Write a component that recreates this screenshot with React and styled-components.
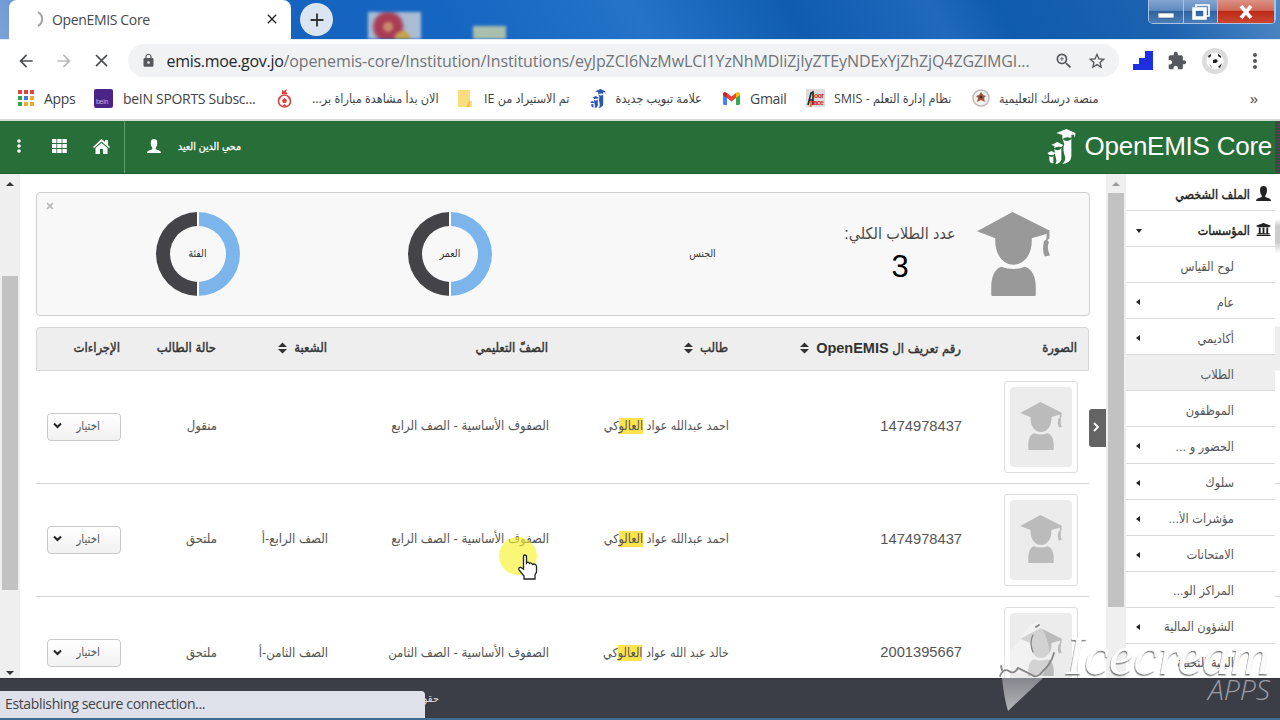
import styled, { createGlobalStyle } from 'styled-components'
import { MdArrowBack, MdArrowForward, MdClose, MdLock, MdZoomIn, MdStarBorder, MdExtension, MdMoreVert, MdAdd } from 'react-icons/md'
import { FaUniversity } from 'react-icons/fa'

const GlobalStyle = createGlobalStyle`
    * {
        box-sizing: border-box;
    }
    body {
        margin: 0;
        overflow: hidden;
        font-family: "Liberation Sans", "DejaVu Sans Condensed", "DejaVu Sans", sans-serif;
        color: #333;
    }
    svg {
        display: block;
        flex-shrink: 0;
    }
`

const Page = styled.div`
    width: 1280px;
    height: 720px;
    display: flex;
    flex-direction: column;
    position: relative;
    overflow: hidden;
    background: #fff;
`

const TabStrip = styled.div`
    height: 40px;
    display: flex;
    position: relative;
    background: linear-gradient(62deg, #7ea2d8 0%, #1562bd 18%, #1566c2 35%, #2473c8 50%, #0f5cb0 62%, #2069bd 73%, #0f5bae 78%, #1c62b0 90%, #5088c4 100%);
    border-bottom: 1px solid #dcebfa;
`

const Tab = styled.div`
    width: 282px;
    height: 40px;
    margin-left: 9px;
    display: flex;
    align-items: center;
    padding: 0 11px 2px 17px;
    background: #fff;
    border-radius: 8px 8px 0 0;
`

const TabTitle = styled.span`
    flex: 1;
    margin-left: 9px;
    font-family: "Open Sans", sans-serif;
    font-size: 14px;
    letter-spacing: -0.35px;
    color: #45494d;
`

const NewTab = styled.div`
    width: 33px;
    height: 33px;
    margin: 3px 0 0 9px;
    display: flex;
    align-items: center;
    justify-content: center;
    border-radius: 50%;
    background: #dbe4f1;
    color: #333;
`

const DesktopIcon = styled.div`
    position: absolute;
    left: ${props => props.$left}px;
    top: ${props => props.$top}px;
    width: ${props => props.$width}px;
    height: ${props => 39 - props.$top}px;
    background: ${props => props.$fill};
    filter: blur(1.5px);
    clip-path: inset(-5px -5px 0 -5px);
`

const WindowButtons = styled.div`
    height: 24px;
    width: 128px;
    margin-left: auto;
    margin-right: 4px;
    display: flex;
    border: 1px solid #a9c2df;
    border-top: 0;
    border-radius: 0 0 5px 5px;
    overflow: hidden;
`

const WindowButton = styled.div`
    flex: ${props => props.$flex};
    display: flex;
    align-items: center;
    justify-content: center;
    border-right: 1px solid #a9c2df;
    background: ${props => props.$close
        ? 'linear-gradient(#dc9184 0, #cf6a58 45%, #bd2b18 50%, #cc4530 100%)'
        : 'linear-gradient(#83a5cf 0, #5f8bc0 45%, #30639f 50%, #4b7fb9 100%)'};
`

const Toolbar = styled.div`
    height: 42px;
    display: flex;
    align-items: center;
    padding: 0 13px 1px 16px;
    color: #55585c;
`

const NavIcon = styled.div`
    width: 37.5px;
    color: ${props => props.$off ? '#b9bbbd' : '#4d5053'};
`

const AddressBar = styled.div`
    width: 991px;
    height: 33px;
    margin-left: -1px;
    display: flex;
    align-items: center;
    justify-content: space-between;
    padding: 0 12px 0 13px;
    border-radius: 17px;
    background: #f1f2f4;
`

const Url = styled.div`
    width: 882px;
    margin-left: -2px;
    margin-right: -8px;
    font-family: "Open Sans", sans-serif;
    font-size: 16px;
    letter-spacing: -0.1px;
    color: #707479;
    white-space: nowrap;
    b {
        font-weight: 400;
        letter-spacing: -0.3px;
        color: #25272a;
    }
`

const Extensions = styled.div`
    flex: 1;
    display: flex;
    align-items: center;
    justify-content: space-between;
    margin-left: 14px;
`

const Bookmarks = styled.div`
    height: 38px;
    display: flex;
    align-items: center;
    padding: 0 0 5px 18px;
    border-bottom: 1px solid #d8dad8;
`

const Bookmark = styled.div`
    width: ${props => props.$width}px;
    display: flex;
    align-items: center;
    gap: ${props => props.$gap || 10}px;
    font-family: "Open Sans", "DejaVu Sans Condensed", "DejaVu Sans", sans-serif;
    font-size: ${props => props.$arabic ? 12.5 : 14}px;
    letter-spacing: ${props => props.$arabic ? 0 : -0.3}px;
    color: #3f4245;
    white-space: nowrap;
`

const Overflow = styled.span`
    margin-left: auto;
    margin-right: 22px;
    font-size: 15px;
    color: #444;
`

const Header = styled.header`
    height: 54px;
    display: flex;
    align-items: center;
    border-top: 1px solid #c7dfcc;
    border-bottom: 1px solid #1f6030;
    background: #276e39;
    color: #fff;
`

const HeaderTools = styled.div`
    width: 125px;
    height: 52px;
    padding: 0 0 2px 16px;
    display: flex;
    align-items: center;
    border-right: 1px solid #5e9a6c;
`

const HeaderIcon = styled.div`
    width: ${props => props.$width}px;
`

const HeaderUser = styled.div`
    display: flex;
    align-items: center;
    gap: 17px;
    margin-left: 22px;
    padding-bottom: 3px;
    font-size: 10.5px;
    -webkit-text-stroke: 0.3px #fff;
`

const Brand = styled.div`
    display: flex;
    align-items: center;
    gap: 9px;
    margin-left: auto;
    margin-right: 3px;
    padding-bottom: 2px;
    font-size: 26px;
    letter-spacing: -0.25px;
    white-space: nowrap;
`

const HeaderEdge = styled.div`
    width: 5px;
    height: 52px;
    background: repeating-linear-gradient(#5c3e5c 0 1px, #34503c 1px 3px);
`

const Main = styled.div`
    height: 504px;
    display: flex;
    overflow: hidden;
`

const Scrollbar = styled.div`
    width: 20px;
    height: 504px;
    flex-shrink: 0;
    display: flex;
    flex-direction: column;
    align-items: center;
    justify-content: space-between;
    padding: 8px 0 3px;
    background: #efefef;
`

const Thumb = styled.div`
    width: 16px;
    height: ${props => props.$height}px;
    margin-top: ${props => props.$offset}px;
    margin-bottom: auto;
    background: #c1c2c1;
`

const Arrow = styled.div`
    border: 4px solid transparent;
    border-top-width: ${props => props.$up ? 0 : 4}px;
    border-bottom-width: ${props => props.$up ? 4 : 0}px;
    border-top-color: ${props => props.$color};
    border-bottom-color: ${props => props.$color};
`

const Content = styled.main`
    width: 1086px;
    height: 504px;
    padding: 18px 0 0 16px;
    flex-shrink: 0;
    position: relative;
    overflow: hidden;
`

const Summary = styled.section`
    width: 1054px;
    height: 124px;
    display: flex;
    border: 1px solid #cdd0ce;
    border-radius: 4px;
    background: #f8f8f8;
`

const Dismiss = styled.div`
    width: 25px;
    padding: 9px 0 0 9px;
`

const ChartCell = styled.div`
    width: ${props => props.$width}px;
    display: flex;
    align-items: center;
    justify-content: center;
`

const Donut = styled.div`
    width: 84px;
    height: 84px;
    border-radius: 50%;
    display: flex;
    align-items: center;
    justify-content: center;
    background: linear-gradient(90deg, #434348 0 41.3px, #fff 41.3px 42.7px, #7cb5ec 42.7px);
`

const DonutHole = styled.div`
    width: 56px;
    height: 56px;
    border-radius: 50%;
    display: flex;
    align-items: center;
    justify-content: center;
    padding-bottom: 3px;
    background: #f8f8f8;
    font-size: 10.5px;
`

const Total = styled.div`
    width: 114px;
    margin-left: 5px;
    padding-top: 31px;
    text-align: center;
    font-size: 16px;
    white-space: nowrap;
    direction: rtl;
    color: #4a4a4a;
`

const TotalCount = styled.div`
    margin-top: 7px;
    font-size: 31px;
    line-height: 34px;
    color: #000;
`

const Table = styled.div`
    width: 1053px;
    margin-top: 11px;
    direction: rtl;
`

const Row = styled.div`
    display: grid;
    grid-template-columns: 116px 233px 180px 221px 111px 96px 96px;
    height: ${props => props.$head ? 43.5 : 113.3}px;
    align-items: center;
    border: 0 solid #d6d8d6;
    border-width: ${props => props.$head ? '1px' : '0 0 1px'};
    border-radius: ${props => props.$head ? '4px 4px 0 0' : 0};
    background: ${props => props.$head ? '#eee' : '#fff'};
    font-size: 13px;
    -webkit-text-stroke: ${props => props.$head ? '0.4px #333' : '0'};
    color: ${props => props.$head ? '#333' : '#555'};
`

const Cell = styled.div`
    padding-right: 11px;
    padding-bottom: ${props => props.$photo ? 0 : 2}px;
    display: flex;
    align-items: center;
    gap: 7px;
    white-space: nowrap;
    font-size: ${props => props.$size ? `${props.$size}px` : 'inherit'};
`

const EmisLabel = styled.span`
    font-size: 14.5px;
    font-weight: 700;
    -webkit-text-stroke: 0;
`

const Mark = styled.mark`
    background: #ffe34c;
    color: inherit;
    padding: 1px 0;
`

const Photo = styled.div`
    width: 74px;
    height: 92px;
    padding: 5px;
    border: 1px solid #ddd;
    border-radius: 3px;
    background: #fff;
`

const PhotoInner = styled.div`
    height: 100%;
    display: flex;
    align-items: center;
    justify-content: center;
    padding-bottom: 2px;
    border-radius: 4px;
    background: #ececec;
`

const Select = styled.div`
    width: 74px;
    height: 28px;
    display: flex;
    align-items: center;
    justify-content: space-between;
    margin-top: 2px;
    padding: 0 20px 2px 5px;
    border: 1px solid #c9c9c9;
    border-radius: 4px;
    background: linear-gradient(#fff, #f1f1f1);
    font-size: 11.5px;
`

const Handle = styled.div`
    position: absolute;
    right: 0;
    top: 235px;
    width: 17px;
    height: 38px;
    display: flex;
    align-items: center;
    justify-content: center;
    padding-right: 2px;
    padding-bottom: 3px;
    border-radius: 3px 0 0 3px;
    background: #646464;
`

const Sidebar = styled.nav`
    width: 149px;
    padding-top: 1px;
    direction: rtl;
    flex-shrink: 0;
`

const SidebarItem = styled.div`
    height: 36.07px;
    display: flex;
    align-items: center;
    padding: ${props => props.$top ? '2px 4px 0 10px' : '2px 41px 0 10px'};
    border-bottom: 1px solid #dadada;
    background: ${props => props.$active ? '#eee' : '#fff'};
    font-size: ${props => props.$top ? 12.5 : 12.7}px;
    -webkit-text-stroke: ${props => props.$top ? '0.4px #222' : '0'};
    color: ${props => props.$top ? '#222' : '#555'};
    white-space: nowrap;
`

const SidebarLabel = styled.span`
    flex: 1;
    margin-right: ${props => props.$top ? 6 : 0}px;
    padding-top: 1px;
`

const Caret = styled.i`
    border-style: solid;
    border-width: ${props => props.$down ? '4px 3px 0' : '3px 4px 3px 0'};
    border-color: ${props => props.$down ? '#222 transparent' : 'transparent #222'};
    margin-top: ${props => props.$down ? 3 : 1}px;
`

const Edge = styled.div`
    flex: 1;
    background: linear-gradient(#fff 0 45px, #ccc 52px 68px, #fff 80px 152px, #eee 153px 196px, #fff 197px 309px, #d6d8d6 309px 310px, #fff 310px 422px, #d6d8d6 422px 423px, #fff 423px);
`

const Footer = styled.footer`
    height: 42px;
    border-top: 1px solid #303238;
    border-bottom: 2px solid #426d92;
    display: flex;
    align-items: flex-end;
    background: #3c3e47;
    color: #ddd;
    font-size: 11px;
`

const Status = styled.div`
    width: 425px;
    height: 27px;
    padding-left: 5px;
    line-height: 26px;
    border-radius: 0 4px 0 0;
    background: #dee0ea;
    font-family: "Open Sans", sans-serif;
    font-size: 14px;
    letter-spacing: -0.36px;
    color: #404348;
`

const FooterText = styled.span`
    width: 14px;
    height: 26px;
    overflow: hidden;
    direction: rtl;
    white-space: nowrap;
`

const Pointer = styled.div`
    position: absolute;
    left: 499px;
    top: 537px;
`

const Watermark = styled.div`
    position: absolute;
    left: 990px;
    top: 610px;
`

const Student = ({ width, height, color }) => (
    <svg width={width} height={height} viewBox="0 0 72 83" fill={color}>
        <path d="M35 0 L71 18 V21 L54 26 C55 41 47 52 36 52 S17 41 18 26 L0 19 Z" />
        <path d="M69 18 H71.500 V26 L69.500 28 L71 30 Q68.500 36 72 43 L67 44 Q64 39 66 29 L68.500 27 Z" />
        <path d="M24 54 Q36 58.500 47 54 C55 56 58 65 58 74 V82 Q58 83 57 83 H15 Q14 83 14 82 V74 C14 65 17 56 24 54 Z" />
    </svg>
)

const User = ({ size = 14 }) => (
    <svg width={size} height={size} viewBox="0 0 14 14" fill="currentColor">
        <path d="M3.800 3 Q4 0 7 0 T10.200 3 V5 Q10 7.500 8.700 8.700 V10.300 L12.500 11.700 Q14 12.300 14 14 H0 Q0 12.300 1.500 11.700 L5.300 10.300 V8.700 Q4 7.500 3.800 5 Z" />
    </svg>
)

const Grads = ({ size, color }) => (
    <svg width={size * 0.82} height={size} viewBox="0 0 28 35" fill={color}>
        <path d="M9 4 L19 0 L28 4 L27.500 9 L26.500 5.500 L24 6 V9 Q19 7 15 10 V6 Z" />
        <path d="M15 10 Q20 14 24 10 V28 Q23 34 15 35 Q19 31 17.500 27 Q15 20 17 15 Z" />
        <path d="M4 16 L10 13 L16 16 L14 18 Q11 17 7 19 V17 Z" />
        <path d="M7 20 Q11 23 14 19 V31 Q12 35 8 35 Q10 32 8 27 Z" />
        <path d="M0 24 L4 22 L8 24 L6 26 H2 Z M2 27 Q4 29 6 27 V34 Q3 35 2 31 Z" />
    </svg>
)

const Sort = () => (
    <svg width="9" height="12" viewBox="0 0 10 13" fill="#333">
        <path d="M0 5.500 L5 0.500 L10 5.500 Z M0 7.500 L5 12.500 L10 7.500 Z" />
    </svg>
)

const AppsIcon = () => (
    <svg width="16" height="16" viewBox="0 0 16 16">
        {['#e0443a', '#e0443a', '#e0443a', '#34a050', '#3f7de0', '#f0a92c', '#34a050', '#f0a92c', '#f0a92c'].map((fill, i) => (
            <rect key={i} x={(i % 3) * 6} y={Math.floor(i / 3) * 6} width="4" height="4" fill={fill} />
        ))}
    </svg>
)

const BeinIcon = () => (
    <svg width="19" height="19" viewBox="0 0 19 19">
        <rect width="19" height="19" rx="2" fill="#4a2587" />
        <text x="2" y="15" fontSize="7" fill="#c7a8e0" fontFamily="Liberation Sans">bein</text>
    </svg>
)

const BallIcon = () => (
    <svg width="15" height="19" viewBox="0 0 15 19">
        <circle cx="7.500" cy="12" r="6" fill="#fff" stroke="#dc453f" strokeWidth="1.600" />
        <path d="M5 1 L7 2 L10 0 L9 3 L11 5 H5 Z M7.500 9 L10 11 L9 14 H6 L5 11 Z M1 9 L4 8 L3 11 Z M14 9 L11 8 L12 11 Z M5 17 L7.500 15 L10 17 Z" fill="#dc453f" />
    </svg>
)

const FolderIcon = () => (
    <svg width="15" height="17" viewBox="0 0 15 17">
        <path d="M1 0 H13 V11 H15 V17 H1 Z" fill="#f9dc7c" />
        <path d="M13 11 V17 H9 L12 11 Z" fill="#ecc45b" />
    </svg>
)

const GmailIcon = () => (
    <svg width="17" height="13" viewBox="0 0 17 13">
        <path d="M0 3 L4 5 V13 H1.500 Q0 13 0 11.500 Z" fill="#4285f4" />
        <path d="M17 3 L13 5 V13 H15.500 Q17 13 17 11.500 Z" fill="#34a853" />
        <path d="M4 1 L8.500 4.500 L13 1 V6 L8.500 9.500 L4 6 Z" fill="#ea4335" />
        <path d="M0 2 Q0 0 2 0 L4 1 V6 L0 3 Z" fill="#c5221f" />
        <path d="M17 2 Q17 0 15 0 L13 1 V6 L17 3 Z" fill="#fbbc04" />
    </svg>
)

const SmisIcon = () => (
    <svg width="19" height="18" viewBox="0 0 19 18">
        <rect width="19" height="18" fill="#dcdcdc" />
        <path d="M2 16 L5 4 L7 3 V16 M3 11 H7" stroke="#222" strokeWidth="1.600" fill="none" />
        <text x="8" y="9" fontSize="7" fontWeight="700" fill="#d3221f" fontFamily="Liberation Sans" textLength="10">oor</text>
        <text x="4" y="16" fontSize="7" fontWeight="700" fill="#e02420" fontFamily="Liberation Sans" textLength="14">pace</text>
    </svg>
)

const CrestIcon = () => (
    <svg width="18" height="18" viewBox="0 0 18 18">
        <circle cx="9" cy="9" r="8" fill="#f4f0ec" stroke="#bdb8b4" strokeWidth="1.500" />
        <path d="M9 3 L11 6 L14 7 L12 9 L13 13 L9 11 L5 13 L6 9 L4 7 L7 6 Z" fill="#a5563f" />
        <circle cx="9" cy="8" r="1.500" fill="#3b3430" />
    </svg>
)

const SoccerIcon = () => (
    <svg width="26" height="26" viewBox="0 0 26 26">
        <circle cx="13" cy="13" r="13" fill="#dcdcdc" />
        <circle cx="13" cy="13" r="8.500" fill="#fff" />
        <path d="M11 12 L14 11 L16 13 L14 15 L11 15 Z M6 8 L9 6 L9 8 L7 10 Z M16 6 L19 8 L19 10 L16 8 Z M7 16 L9 18 L10 20 Z M17 18 L20 15 L18 20 L16 19 Z" fill="#222" />
    </svg>
)

const rows = [
    { id: '1474978437', name: 'احمد عبدالله عواد ', grade: 'الصفوف الأساسية - الصف الرابع', section: '', status: 'منقول' },
    { id: '1474978437', name: 'احمد عبدالله عواد ', grade: 'الصفوف الأساسية - الصف الرابع', section: 'الصف الرابع-أ', status: 'ملتحق' },
    { id: '2001395667', name: 'خالد عبد الله عواد ', grade: 'الصفوف الأساسية - الصف الثامن', section: 'الصف الثامن-أ', status: 'ملتحق' },
]

const menu = [
    { label: 'لوح القياس' },
    { label: 'عام', caret: true },
    { label: 'أكاديمي', caret: true },
    { label: 'الطلاب', active: true },
    { label: 'الموظفون' },
    { label: 'الحضور و ...', caret: true },
    { label: 'سلوك', caret: true },
    { label: 'مؤشرات الأ...', caret: true },
    { label: 'الامتحانات', caret: true },
    { label: 'المراكز الو...' },
    { label: 'الشؤون المالية', caret: true },
    { label: 'البنية التحتية', caret: true },
]

const Browser = () => (
    <>
        <TabStrip>
            <Tab>
                <svg width="17" height="18" viewBox="0 0 17 18" fill="none" stroke="#a5a5a5" strokeWidth="2">
                    <path d="M12 2 A8 8 0 0 1 12 16" />
                </svg>
                <TabTitle>OpenEMIS Core</TabTitle>
                <MdClose size={16} color="#222" />
            </Tab>
            <NewTab><MdAdd size={22} /></NewTab>
            <DesktopIcon $left={368} $top={12} $width={53} $fill="radial-gradient(circle at 65% 100%, #c9a24a 0 7px, transparent 9px), radial-gradient(circle at 38% 55%, #c98a6a 0 4px, #a83c55 6px 13px, #a9bcd4 17px)" />
            <DesktopIcon $left={473} $top={26} $width={33} $fill="#a9bfae" />
            <WindowButtons>
                <WindowButton $flex={35}>
                    <svg width="16" height="14" viewBox="0 0 16 14"><rect y="8" width="16" height="5" fill="#fff" stroke="#425b7c" strokeWidth=".7" /></svg>
                </WindowButton>
                <WindowButton $flex={34}>
                    <svg width="18" height="16" viewBox="0 0 18 16" fill="none" stroke="#fff">
                        <path d="M4 3 V1 H17 V12 H14" strokeWidth="1.700" />
                        <rect x="2" y="5" width="11" height="9" strokeWidth="3.500" />
                    </svg>
                </WindowButton>
                <WindowButton $flex={57} $close>
                    <svg width="16" height="14" viewBox="0 0 16 14"><path d="M3 1 L13 13 M13 1 L3 13" stroke="#fff" strokeWidth="3.600" /></svg>
                </WindowButton>
            </WindowButtons>
        </TabStrip>
        <Toolbar>
            <NavIcon><MdArrowBack size={20} /></NavIcon>
            <NavIcon $off><MdArrowForward size={20} /></NavIcon>
            <NavIcon><MdClose size={21} /></NavIcon>
            <AddressBar>
                <MdLock size={15} />
                <Url><b>emis.moe.gov.jo</b>/openemis-core/Institution/Institutions/eyJpZCI6NzMwLCI1YzNhMDliZjIyZTEyNDExYjZhZjQ4ZGZlMGI...</Url>
                <MdZoomIn size={20} />
                <MdStarBorder size={20} />
            </AddressBar>
            <Extensions>
                <svg width="20" height="19" viewBox="0 0 20 19" fill="#1d2fe0"><path d="M0 19 V13 H6 V7 H12 V0 H20 V19 Z" /></svg>
                <MdExtension size={20} />
                <SoccerIcon />
                <MdMoreVert size={24} />
            </Extensions>
        </Toolbar>
        <Bookmarks>
            <Bookmark $width={76}><AppsIcon />Apps</Bookmark>
            <Bookmark $width={183}><BeinIcon />beIN SPORTS Subsc...</Bookmark>
            <Bookmark $width={180} $gap={20} $arabic><BallIcon /><bdi dir="rtl">الان بدأ مشاهدة مباراة بر...</bdi></Bookmark>
            <Bookmark $width={133} $gap={12} $arabic><FolderIcon /><bdi dir="rtl">تم الاستيراد من IE</bdi></Bookmark>
            <Bookmark $width={133} $arabic><Grads size={19} color="#2c56b4" /><bdi>علامة تبويب جديدة</bdi></Bookmark>
            <Bookmark $width={83}><GmailIcon />Gmail</Bookmark>
            <Bookmark $width={166} $gap={9} $arabic><SmisIcon /><bdi dir="ltr">SMIS - نظام إدارة التعلم</bdi></Bookmark>
            <Bookmark $width={130} $gap={9} $arabic><CrestIcon /><bdi>منصة درسك التعليمية</bdi></Bookmark>
            <Overflow>»</Overflow>
        </Bookmarks>
    </>
)

const App = () => {
    return (
        <Page>
            <GlobalStyle />
            <Browser />
            <Header>
                <HeaderTools>
                    <HeaderIcon $width={36}>
                        <svg width="6" height="14" viewBox="0 0 6 14" fill="#fff"><circle cx="3" cy="2" r="1.800" /><circle cx="3" cy="7" r="1.800" /><circle cx="3" cy="12" r="1.800" /></svg>
                    </HeaderIcon>
                    <HeaderIcon $width={41}>
                        <svg width="15" height="14" viewBox="0 0 15 14" fill="#fff">
                            {[0, 1, 2, 3, 4, 5, 6, 7, 8].map(i => <rect key={i} x={(i % 3) * 5.200} y={Math.floor(i / 3) * 5} width="4.400" height="4" />)}
                        </svg>
                    </HeaderIcon>
                    <HeaderIcon $width={18}>
                        <svg width="17" height="15" viewBox="0 0 17 15" fill="#fff">
                            <path d="M8.500 0 L12 3 V1 H15 V6 L17 8 L16 9 L8.500 2.500 L1 9 L0 8 Z" />
                            <path d="M8.500 4 L14.500 9 V15 H10 V10 H7 V15 H2.500 V9 Z" />
                        </svg>
                    </HeaderIcon>
                </HeaderTools>
                <HeaderUser><User /><span>محي الدين العيد</span></HeaderUser>
                <Brand><Grads size={35} color="#fff" />OpenEMIS Core</Brand>
                <HeaderEdge />
            </Header>
            <Main>
                <Scrollbar>
                    <Arrow $up $color="#333" />
                    <Thumb $height={314} $offset={90} />
                    <Arrow $color="#333" />
                </Scrollbar>
                <Content>
                    <Summary>
                        <Dismiss>
                            <svg width="8" height="8" viewBox="0 0 8 8" stroke="#b5b5b5" strokeWidth="1.700"><path d="M1 1 L7 7 M7 1 L1 7" /></svg>
                        </Dismiss>
                        <ChartCell $width={271}><Donut><DonutHole>الفئة</DonutHole></Donut></ChartCell>
                        <ChartCell $width={234}><Donut><DonutHole>العمر</DonutHole></Donut></ChartCell>
                        <ChartCell $width={271}><DonutHole>الجنس</DonutHole></ChartCell>
                        <Total>
                            عدد الطلاب الكلي:
                            <TotalCount>3</TotalCount>
                        </Total>
                        <ChartCell $width={112}><Student width={73} height={84} color="#999" /></ChartCell>
                    </Summary>
                    <Table>
                        <Row $head>
                            <Cell>الصورة</Cell>
                            <Cell><span>رقم تعريف ال <EmisLabel>OpenEMIS</EmisLabel></span><Sort /></Cell>
                            <Cell>طالب <Sort /></Cell>
                            <Cell>الصفّ التعليمي</Cell>
                            <Cell>الشعبة <Sort /></Cell>
                            <Cell>حالة الطالب</Cell>
                            <Cell>الإجراءات</Cell>
                        </Row>
                        {rows.map((row, i) => (
                            <Row key={i}>
                                <Cell $photo><Photo><PhotoInner><Student width={42} height={48} color="#bbb" /></PhotoInner></Photo></Cell>
                                <Cell $size={14.7}>{row.id}</Cell>
                                <Cell $size={12.5}><span>{row.name}<Mark>العالو</Mark>كي</span></Cell>
                                <Cell>{row.grade}</Cell>
                                <Cell>{row.section}</Cell>
                                <Cell>{row.status}</Cell>
                                <Cell>
                                    <Select>
                                        اختيار
                                        <svg width="9" height="7" viewBox="0 0 9 7" fill="none" stroke="#222" strokeWidth="2"><path d="M1 1.500 L4.500 5 L8 1.500" /></svg>
                                    </Select>
                                </Cell>
                            </Row>
                        ))}
                    </Table>
                    <Handle>
                        <svg width="7" height="10" viewBox="0 0 7 10" fill="none" stroke="#fff" strokeWidth="1.800"><path d="M1 1 L5 5 L1 9" /></svg>
                    </Handle>
                </Content>
                <Scrollbar>
                    <Arrow $up $color="#999" />
                    <Thumb $height={414} $offset={7} />
                    <Arrow $color="#999" />
                </Scrollbar>
                <Sidebar>
                    <SidebarItem $top><User size={15} /><SidebarLabel $top>الملف الشخصي</SidebarLabel></SidebarItem>
                    <SidebarItem $top><FaUniversity size={15} /><SidebarLabel $top>المؤسسات</SidebarLabel><Caret $down /></SidebarItem>
                    {menu.map(item => (
                        <SidebarItem key={item.label} $active={item.active}>
                            <SidebarLabel>{item.label}</SidebarLabel>
                            {item.caret && <Caret />}
                        </SidebarItem>
                    ))}
                </Sidebar>
                <Edge />
            </Main>
            <Footer>
                <Status>Establishing secure connection...</Status>
                <FooterText>حقوق</FooterText>
            </Footer>
            <Pointer>
                <svg width="40" height="44" viewBox="0 0 40 44">
                    <circle cx="19" cy="19" r="19" fill="#f9f32c" opacity=".65" />
                    <path d="M24.500 32 V19 Q25.500 17 27.500 19 V26 Q29 24 30.500 26.500 Q32 25 33.500 27.500 Q36 26 37.500 29 V35 L36 38 V42 H25 V39 L20 33 Q19 30 22 30.500 Z" fill="#fff" stroke="#222" strokeWidth="1.300" />
                </svg>
            </Pointer>
            <Watermark>
                <svg width="290" height="108" viewBox="0 0 290 108">
                    <defs>
                        <filter id="emboss" x="-10%" y="-20%" width="120%" height="150%">
                            <feDropShadow dx="-0.7" dy="1.5" stdDeviation="0.7" floodColor="#555" floodOpacity=".8" />
                        </filter>
                        <linearGradient id="cone" x1="0" y1="0" x2="0" y2="1">
                            <stop offset="0" stopColor="#85868d" />
                            <stop offset="1" stopColor="#b5b6bb" />
                        </linearGradient>
                    </defs>
                    <path d="M11 64 C8 48 20 40 27 34 C34 20 47 6 50 14 C56 27 66 42 53 65 Q50 70 42 67 Q31 58 11 68 Z" fill="#fff" opacity=".35" />
                    <path d="M12 68 H53 L18 101 Q14 88 12 68 Z" fill="url(#cone)" />
                    <g fill="none" stroke="#858585" strokeWidth="1.800" strokeLinecap="round">
                        <path d="M10 66 Q13 58 19 61 Q24 65 28 58 Q34 61 42 65 Q47 69 53 61 Q61 54 64 43" />
                        <path d="M43 25 Q39 33 43 42" strokeWidth="1.200" />
                        <path d="M46 17 L49 15 M11 56 L12 60" />
                    </g>
                    <text
                        x="76" y="64" textLength="204" lengthAdjust="spacingAndGlyphs"
                        fontFamily="Liberation Serif" fontStyle="italic" fontSize="54"
                        fill="#fff" fillOpacity=".95" filter="url(#emboss)"
                    >
                        Icecream
                    </text>
                    <text
                        x="218" y="90" textLength="62" lengthAdjust="spacingAndGlyphs"
                        fontFamily="Open Sans" fontStyle="italic" fontWeight="300" fontSize="27" fill="#9b9ca3"
                    >
                        APPS
                    </text>
                </svg>
            </Watermark>
        </Page>
    );
}

export default App;
